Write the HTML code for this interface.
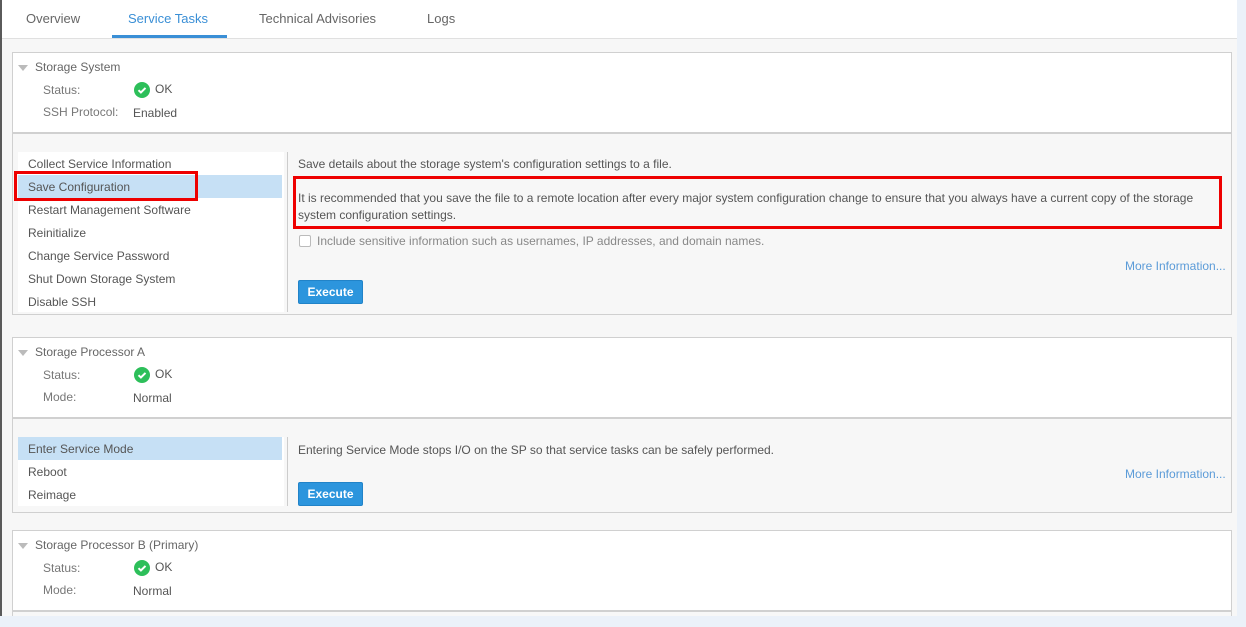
<!DOCTYPE html>
<html><head><style>
*{margin:0;padding:0;box-sizing:border-box}
body{width:1246px;height:627px;overflow:hidden;background:#ebf1f9;font-family:"Liberation Sans",sans-serif;font-size:12px;color:#555;position:relative}
.main{position:absolute;left:0;top:0;width:1237px;height:616px;background:#f7f7f7;border-left:2px solid #5a5a5a}
.tabs{position:absolute;left:0;top:0;width:1235px;height:39px;background:#fff;border-bottom:1px solid #e0e0e0}
.tab{position:absolute;top:11px;font-size:13px;color:#666}
.tab.act{color:#3a8fd6}
.ul{position:absolute;left:110px;top:35px;width:115px;height:3px;background:#3a8fd6}
.panel{position:absolute;left:10px;width:1220px;border:1px solid #d0d0d0;background:#f7f7f7}
.hdr{position:absolute;left:0;top:0;width:100%;background:#fff;border-bottom:2px solid #d0d0d0}
.abs{position:absolute;white-space:nowrap}
.tri{position:absolute;width:0;height:0;border-left:5px solid transparent;border-right:5px solid transparent;border-top:6px solid #bbb}
.lbl{color:#777}
.ok{position:absolute;width:16px;height:16px;border-radius:50%;background:#2dbf5a}
.list{position:absolute;background:#fff}
.item{position:absolute;left:0;width:264px;height:23px;padding-left:10px;padding-top:1px;line-height:23px;color:#555}
.sel{background:#c6e0f5}
.vd{position:absolute;width:1px;background:#ccc}
.btn{position:absolute;width:65px;height:24px;background:#2c95dd;border:1px solid #2183c8;border-radius:2px;color:#fff;font-weight:bold;font-size:12px;text-align:center;line-height:22px}
.more{color:#5b9bd8}
.red{position:absolute;border:3px solid #ee0000}
</style></head><body>
<div class="main">
<div class="tabs">
<div class="tab" style="left:24px">Overview</div>
<div class="tab act" style="left:126px">Service Tasks</div>
<div class="tab" style="left:257px">Technical Advisories</div>
<div class="tab" style="left:425px">Logs</div>
<div class="ul"></div>
</div>

<div class="panel" style="top:52px;height:263px">
<div class="hdr" style="height:81px"></div>
<div class="tri" style="left:5px;top:12px"></div>
<div class="abs" style="left:22px;top:7px;color:#666">Storage System</div>
<div class="abs lbl" style="left:30px;top:30px">Status:</div>
<div class="ok" style="left:121px;top:29px"><svg width="16" height="16"><path d="M4.5 8.2l2.4 2.3 4.6-4.6" stroke="#fff" stroke-width="2" fill="none"/></svg></div>
<div class="abs" style="left:142px;top:29px">OK</div>
<div class="abs lbl" style="left:30px;top:52px">SSH Protocol:</div>
<div class="abs" style="left:120px;top:53px">Enabled</div>
<div class="list" style="left:5px;top:99px;width:266px;height:160px">
<div class="item" style="top:0">Collect Service Information</div>
<div class="item sel" style="top:23px">Save Configuration</div>
<div class="item" style="top:46px">Restart Management Software</div>
<div class="item" style="top:69px">Reinitialize</div>
<div class="item" style="top:92px">Change Service Password</div>
<div class="item" style="top:115px">Shut Down Storage System</div>
<div class="item" style="top:138px">Disable SSH</div>
</div>
<div class="vd" style="left:274px;top:99px;height:160px"></div>
<div class="abs" style="left:285px;top:104px">Save details about the storage system's configuration settings to a file.</div>
<div class="abs" style="left:285px;top:137px;line-height:17px">It is recommended that you save the file to a remote location after every major system configuration change to ensure that you always have a current copy of the storage<br>system configuration settings.</div>
<div class="abs" style="left:286px;top:182px;width:12px;height:12px;border:1px solid #bbb;border-radius:2px;background:#fff"></div>
<div class="abs" style="left:304px;top:181px;color:#888">Include sensitive information such as usernames, IP addresses, and domain names.</div>
<div class="abs more" style="left:1112px;top:206px">More Information...</div>
<div class="btn" style="left:285px;top:227px">Execute</div>
</div>

<div class="panel" style="top:337px;height:176px">
<div class="hdr" style="height:81px"></div>
<div class="tri" style="left:5px;top:12px"></div>
<div class="abs" style="left:22px;top:7px;color:#666">Storage Processor A</div>
<div class="abs lbl" style="left:30px;top:30px">Status:</div>
<div class="ok" style="left:121px;top:29px"><svg width="16" height="16"><path d="M4.5 8.2l2.4 2.3 4.6-4.6" stroke="#fff" stroke-width="2" fill="none"/></svg></div>
<div class="abs" style="left:142px;top:29px">OK</div>
<div class="abs lbl" style="left:30px;top:52px">Mode:</div>
<div class="abs" style="left:120px;top:53px">Normal</div>
<div class="list" style="left:5px;top:99px;width:266px;height:69px">
<div class="item sel" style="top:0">Enter Service Mode</div>
<div class="item" style="top:23px">Reboot</div>
<div class="item" style="top:46px">Reimage</div>
</div>
<div class="vd" style="left:274px;top:99px;height:69px"></div>
<div class="abs" style="left:285px;top:105px">Entering Service Mode stops I/O on the SP so that service tasks can be safely performed.</div>
<div class="abs more" style="left:1112px;top:129px">More Information...</div>
<div class="btn" style="left:285px;top:144px">Execute</div>
</div>

<div class="panel" style="top:530px;height:90px">
<div class="hdr" style="height:81px"></div>
<div class="tri" style="left:5px;top:12px"></div>
<div class="abs" style="left:22px;top:7px;color:#666">Storage Processor B (Primary)</div>
<div class="abs lbl" style="left:30px;top:30px">Status:</div>
<div class="ok" style="left:121px;top:29px"><svg width="16" height="16"><path d="M4.5 8.2l2.4 2.3 4.6-4.6" stroke="#fff" stroke-width="2" fill="none"/></svg></div>
<div class="abs" style="left:142px;top:29px">OK</div>
<div class="abs lbl" style="left:30px;top:52px">Mode:</div>
<div class="abs" style="left:120px;top:53px">Normal</div>
</div>
</div>
<div style="position:absolute;left:0;top:616px;width:1246px;height:11px;background:#ebf1f9"></div>
<div class="red" style="left:14px;top:171px;width:184px;height:30px"></div>
<div class="red" style="left:293px;top:176px;width:929px;height:53px"></div>
</body></html>
